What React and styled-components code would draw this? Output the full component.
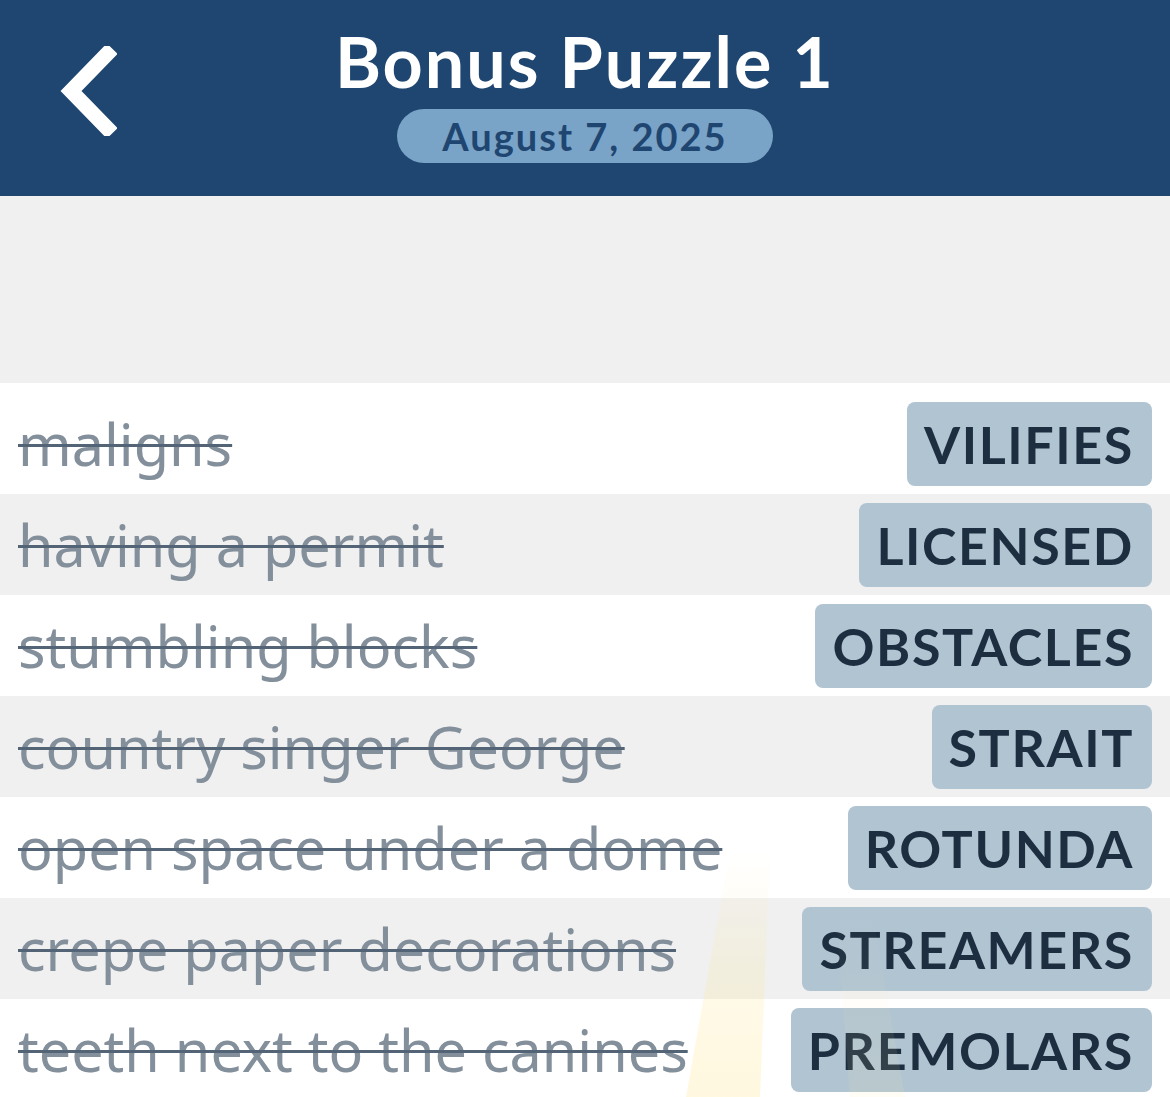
import styled, { createGlobalStyle } from "styled-components";

const GlobalStyle = createGlobalStyle`
  body {
    margin: 0;
    background: #ffffff;
    font-family: "Lato", "Noto Sans", sans-serif;
  }
`;

const rows = [
  { clue: "maligns", answer: "VILIFIES" },
  { clue: "having a permit", answer: "LICENSED" },
  { clue: "stumbling blocks", answer: "OBSTACLES" },
  { clue: "country singer George", answer: "STRAIT" },
  { clue: "open space under a dome", answer: "ROTUNDA" },
  { clue: "crepe paper decorations", answer: "STREAMERS" },
  { clue: "teeth next to the canines", answer: "PREMOLARS" },
];

function BackIcon() {
  return (
    <svg width="60" height="90" viewBox="0 0 60 90">
      <path
        d="M50 8 L14 45 L50 82"
        fill="none"
        stroke="#ffffff"
        strokeWidth="15"
        strokeLinecap="square"
        strokeLinejoin="miter"
      />
    </svg>
  );
}

// faint yellow glare that sits over the bottom of the list
function Glare() {
  return (
    <svg width="1170" height="1097" viewBox="0 0 1170 1097">
      <defs>
        <linearGradient id="fade" x1="0" y1="0" x2="0" y2="1">
          <stop offset="0" stopColor="#ffe27a" stopOpacity="0" />
          <stop offset="0.5" stopColor="#ffe27a" stopOpacity="0.16" />
          <stop offset="1" stopColor="#ffe27a" stopOpacity="0.24" />
        </linearGradient>
        <linearGradient id="fade2" x1="0" y1="0" x2="0" y2="1">
          <stop offset="0" stopColor="#ffe9a8" stopOpacity="0" />
          <stop offset="1" stopColor="#ffe9a8" stopOpacity="0.12" />
        </linearGradient>
      </defs>
      <polygon points="730,850 770,850 760,1097 686,1097" fill="url(#fade)" />
      <polygon points="835,900 870,900 905,1097 850,1097" fill="url(#fade2)" />
    </svg>
  );
}

export default function App() {
  return (
    <Page>
      <GlobalStyle />
      <Header>
        <BackButton>
          <BackIcon />
        </BackButton>
        <Title>Bonus Puzzle 1</Title>
        <DatePill>August 7, 2025</DatePill>
      </Header>
      <Spacer />
      <List>
        {rows.map((r, i) => (
          <Row key={r.answer} $alt={i % 2 === 1} $first={i === 0}>
            <Clue>{r.clue}</Clue>
            <Answer>{r.answer}</Answer>
          </Row>
        ))}
      </List>
      <GlareLayer>
        <Glare />
      </GlareLayer>
    </Page>
  );
}

const Page = styled.div`
  position: relative;
  width: 1170px;
  height: 1097px;
  overflow: hidden;
  background: #ffffff;
`;

const GlareLayer = styled.div`
  position: absolute;
  inset: 0;
  pointer-events: none;
`;

const Header = styled.header`
  position: relative;
  height: 196px;
  background: #1f4670;
  display: flex;
  flex-direction: column;
  align-items: center;
  box-sizing: border-box;
  padding-top: 21px;
`;

const BackButton = styled.div`
  position: absolute;
  left: 57px;
  top: 46px;
  display: flex;
`;

const Title = styled.h1`
  margin: 0;
  color: #ffffff;
  font-size: 70px;
  font-weight: 700;
  line-height: 80px;
  letter-spacing: 2px;
`;

const DatePill = styled.div`
  margin-top: 8px;
  width: 376px;
  height: 54px;
  border-radius: 27px;
  background: #7aa3c8;
  color: #1f4670;
  font-size: 38px;
  font-weight: 700;
  display: flex;
  align-items: center;
  justify-content: center;
  letter-spacing: 2px;
`;

const Spacer = styled.div`
  height: 187px;
  background: #f0f0f0;
`;

const List = styled.div`
  display: flex;
  flex-direction: column;
`;

const Row = styled.div`
  box-sizing: border-box;
  padding: ${(p) => (p.$first ? "19px" : "9px")} 18px 8px 18px;
  height: ${(p) => (p.$first ? "111px" : "101px")};
  background: ${(p) => (p.$alt ? "#f0f0f0" : "#ffffff")};
  display: flex;
  align-items: center;
  justify-content: space-between;
`;

const Clue = styled.span`
  font-family: "Noto Sans", sans-serif;
  font-size: 57.5px;
  color: #838f9b;
  text-decoration: line-through;
  text-decoration-color: #526476;
  text-decoration-thickness: 3px;
  white-space: nowrap;
`;

const Answer = styled.span`
  height: 84px;
  box-sizing: border-box;
  padding: 0 18px 0 17px;
  border-radius: 8px;
  background: #b0c4d2;
  color: #1c2e40;
  font-size: 52px;
  font-weight: 700;
  display: flex;
  align-items: center;
  letter-spacing: 1.6px;
`;
